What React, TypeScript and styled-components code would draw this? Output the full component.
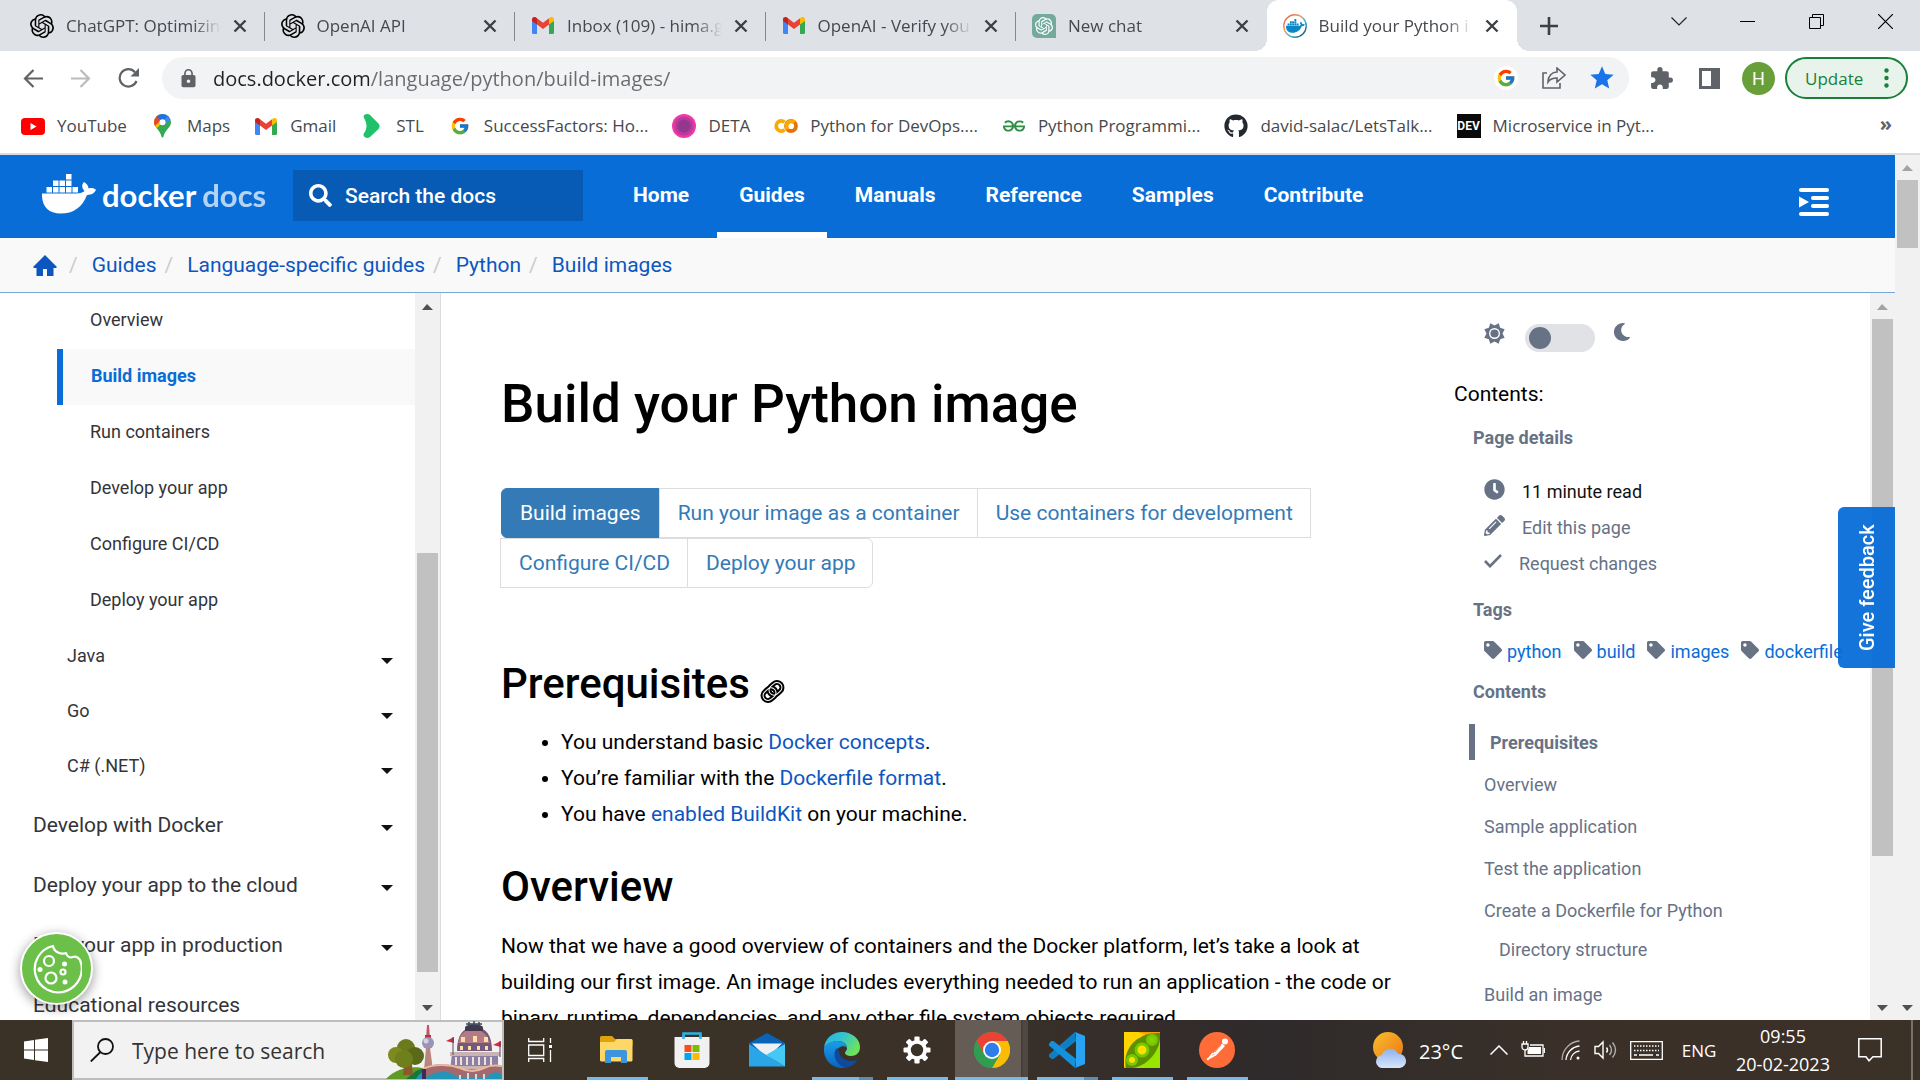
import React from "react";
import styled, { createGlobalStyle, css } from "styled-components";
import { SiOpenai, SiGooglecolab, SiGeeksforgeeks } from "react-icons/si";
import { FcGoogle } from "react-icons/fc";
import { FaMoon, FaClock, FaPencilAlt, FaTag, FaGithub, FaSearch } from "react-icons/fa";
import { MdExtension, MdStar, MdLock } from "react-icons/md";

const uiFont = `"Open Sans", "Noto Sans", sans-serif`;
const docFont = `Roboto, "Liberation Sans", sans-serif`;

const GlobalStyle = createGlobalStyle`
  *, *::before, *::after { box-sizing: border-box; }
  body { margin: 0; background: #fff; overflow: hidden; }
  a { color: inherit; text-decoration: none; }
  ul { list-style: none; margin: 0; padding: 0; }
  button { border: 0; padding: 0; margin: 0; background: none; color: inherit; font: inherit; cursor: pointer; }
  svg { display: block; flex: none; }
`;

const Screen = styled.div`
  display: flex;
  flex-direction: column;
  height: 100vh;
  color: #000;
  font-family: ${docFont};
`;

/* ---------- browser chrome ---------- */

const TabStrip = styled.div`
  display: flex;
  flex: none;
  height: 51px;
  padding-left: 14px;
  background: #dee1e6;
  font-family: ${uiFont};
`;

const Tabs = styled.div`
  display: flex;
  flex: 0 1 1503px;
  min-width: 0;
`;

const Tab = styled.div<{ $active?: boolean; $divided?: boolean }>`
  position: relative;
  display: flex;
  flex: 1 1 0;
  align-items: center;
  gap: 12px;
  min-width: 0;
  padding: 0 18px 0 16px;
  font-size: 17px;
  color: #45494d;
  ${(p) =>
    p.$divided &&
    css`
      &::after {
        content: "";
        position: absolute;
        right: 0;
        top: 12px;
        width: 1px;
        height: 29px;
        background: #85888c;
      }
    `}
  ${(p) =>
    p.$active &&
    css`
      background: #fff;
      border-radius: 12px 12px 0 0;
      &::before,
      &::after {
        content: "";
        position: absolute;
        bottom: 0;
        width: 12px;
        height: 12px;
      }
      &::before {
        left: -12px;
        background: radial-gradient(circle at 0 0, transparent 12px, #fff 12px);
      }
      &::after {
        right: -12px;
        background: radial-gradient(circle at 100% 0, transparent 12px, #fff 12px);
      }
    `}
`;

const TabTitle = styled.span`
  flex: 1;
  min-width: 0;
  overflow: hidden;
  white-space: nowrap;
  line-height: 24px;
  mask-image: linear-gradient(to right, #000 82%, transparent);
`;

const NewTab = styled.button`
  display: grid;
  place-items: center;
  width: 42px;
  margin-left: 11px;
`;

const WindowButtons = styled.div`
  display: flex;
  margin-left: auto;
  height: 43px;
`;

const WindowButton = styled.button`
  display: grid;
  place-items: center;
  width: 69px;
`;

const Toolbar = styled.div`
  display: flex;
  flex: none;
  align-items: center;
  height: 54px;
  padding: 0 12px 0 9px;
  font-family: ${uiFont};
`;

const ToolButton = styled.button<{ $dim?: boolean }>`
  display: grid;
  place-items: center;
  width: 48px;
  height: 42px;
  color: ${(p) => (p.$dim ? "#babcbe" : "#5f6368")};
`;

const Omnibox = styled.div`
  display: flex;
  flex: 1;
  align-items: center;
  height: 42px;
  margin-left: 9px;
  margin-right: 8px;
  padding-left: 16px;
  padding-right: 3px;
  background: #f1f3f4;
  border-radius: 21px;
  color: #5f6368;
`;

const UrlInput = styled.input`
  flex: 1;
  min-width: 0;
  height: 42px;
  margin-left: 14px;
  padding: 0;
  border: 0;
  outline: 0;
  color: #5f6368;
  font-family: ${uiFont};
  font-size: 20px;
  background: linear-gradient(to right, #202124 156px, #676b70 156px);
  background-clip: text;
  -webkit-text-fill-color: transparent;
`;

const Avatar = styled.button`
  width: 33px;
  height: 33px;
  margin: 0 10px 0 9px;
  border-radius: 50%;
  background: #689f38;
  color: #fff;
  font-family: ${docFont};
  font-size: 18px;
`;

const UpdateButton = styled.button`
  display: flex;
  align-items: center;
  justify-content: space-between;
  width: 123px;
  height: 42px;
  padding: 0 17px 0 18px;
  border: 2px solid #188038;
  border-radius: 21px;
  background: #e8f3ec;
  color: #188038;
  font-size: 17px;
`;

const BookmarkBar = styled.nav`
  display: flex;
  flex: none;
  align-items: center;
  gap: 24px;
  height: 50px;
  padding: 0 28px 6px 21px;
  border-bottom: 2px solid #dadce0;
  font-family: ${uiFont};
`;

const Bookmark = styled.a`
  display: flex;
  align-items: center;
  gap: 12px;
  color: #45494d;
  font-size: 17px;
  line-height: 24px;
  white-space: nowrap;
`;

const BookmarkOverflow = styled.button`
  margin-left: auto;
  padding-bottom: 4px;
  color: #5f6368;
  font-size: 20px;
  font-weight: 700;
  line-height: 24px;
`;

const IconBox = styled.span<{ $color?: string; $bg?: string; $round?: boolean }>`
  display: grid;
  place-items: center;
  flex: none;
  width: 24px;
  height: 24px;
  color: ${(p) => p.$color ?? "inherit"};
  background: ${(p) => p.$bg ?? "transparent"};
  border-radius: ${(p) => (p.$round ? "50%" : "0")};
`;

const DevBadge = styled(IconBox)`
  font: 700 12px ${docFont};
  color: #fff;
  background: #0a0a0a;
`;

/* ---------- docs page ---------- */

const Viewport = styled.div`
  display: flex;
  flex: 1;
  min-height: 0;
`;

const Page = styled.div`
  position: relative;
  display: flex;
  flex: 1;
  flex-direction: column;
  min-width: 0;
`;

const Header = styled.header`
  display: flex;
  flex: none;
  align-items: center;
  height: 83px;
  padding: 0 66px 0 42px;
  background: #086dd7;
  color: #fff;
`;

const Brand = styled.a`
  display: flex;
  align-items: center;
  width: 251px;
  gap: 6px;
  padding-bottom: 4px;
  font-family: Lato, sans-serif;
  font-size: 31px;
  line-height: 40px;
  white-space: nowrap;
  & > svg {
    margin-bottom: 2px;
  }
`;

const BrandWord = styled.span<{ $faded?: boolean }>`
  padding-top: 1px;
  font-weight: 700;
  opacity: ${(p) => (p.$faded ? 0.7 : 1)};
`;

const DocsSearch = styled.label`
  display: flex;
  align-items: center;
  gap: 13px;
  width: 290px;
  height: 51px;
  margin-bottom: 2px;
  padding: 0 16px;
  background: #085bb4;
`;

const DocsSearchInput = styled.input`
  flex: 1;
  min-width: 0;
  padding: 0;
  border: 0;
  outline: 0;
  background: none;
  color: #fff;
  font: 500 21px/28px ${docFont};
  &::placeholder {
    color: #fff;
    opacity: 1;
  }
`;

const MainNav = styled.nav`
  display: flex;
  align-self: stretch;
  gap: 6px;
  margin-left: 28px;
`;

const NavLink = styled.a<{ $active?: boolean }>`
  display: flex;
  align-items: center;
  padding: 2px 22px 0;
  border-bottom: 6px solid ${(p) => (p.$active ? "#fff" : "transparent")};
  font-size: 21px;
  font-weight: 700;
`;

const TocToggle = styled.button`
  margin-left: auto;
  padding-top: 10px;
`;

const Breadcrumbs = styled.nav`
  display: flex;
  flex: none;
  align-items: center;
  height: 55px;
  padding: 0 33px;
  background: #f9f9f9;
  border-bottom: 1px solid #7ba5dd;
  color: #0d56c0;
  font-size: 21px;
`;

const HomeCrumb = styled.a`
  margin-right: 4px;
`;

const Crumb = styled.a`
  &::before {
    content: "/";
    padding: 0 14px 0 8px;
    color: #ccc;
  }
`;

const Columns = styled.div`
  display: flex;
  flex: 1;
  min-height: 0;
`;

const Sidebar = styled.aside`
  display: flex;
  flex: none;
  width: 441px;
  border-right: 1px solid #dcdcdc;
`;

const SideList = styled.ul`
  flex: 1;
  min-width: 0;
  height: 100%;
  overflow: hidden;
  color: #33343a;
`;

const SideItem = styled.li<{ $level: 1 | 2 | 3; $active?: boolean }>`
  display: flex;
  align-items: center;
  justify-content: space-between;
  height: ${(p) => ({ 1: 60, 2: 55, 3: 56 })[p.$level]}px;
  padding-right: 22px;
  padding-left: ${(p) => ({ 1: 33, 2: 67, 3: 90 })[p.$level]}px;
  font-size: ${(p) => (p.$level === 1 ? 21 : 18)}px;
  ${(p) =>
    p.$active &&
    css`
      margin-left: 57px;
      padding-left: 28px;
      border-left: 6px solid #086dd7;
      background: #f9f9f9;
      color: #086dd7;
      font-weight: 700;
    `}
  & > a {
    padding-top: ${(p) => (p.$level === 1 ? 2 : 0)}px;
    padding-bottom: ${(p) => ({ 1: 0, 2: 2, 3: 4 })[p.$level]}px;
  }
  & > svg {
    margin-top: 8px;
    color: #111;
  }
`;

const ScrollTrack = styled.div<{ $inner?: boolean }>`
  display: flex;
  flex: none;
  flex-direction: column;
  align-items: center;
  width: 25px;
  padding-top: ${(p) => (p.$inner ? 1 : 0)}px;
  background: #f1f1f1;
`;

const ScrollArrow = styled.button<{ $down?: boolean; $dim?: boolean }>`
  flex: none;
  width: 25px;
  height: 25px;
  background: ${(p) => (p.$dim ? "#a3a3a3" : "#505050")};
  clip-path: ${(p) =>
    p.$down ? "polygon(7px 10px, 18px 10px, 12px 16px)" : "polygon(7px 16px, 18px 16px, 12px 10px)"};
`;

const ScrollPart = styled.div<{ $grow: number; $thumb?: boolean }>`
  flex: ${(p) => p.$grow} 1 0;
  width: 21px;
  background: ${(p) => (p.$thumb ? "#c1c1c1" : "transparent")};
`;

const Article = styled.main`
  flex: 1;
  min-width: 0;
  padding: 81px 54px 0 60px;
  overflow: hidden;
`;

const Title = styled.h1`
  margin: 0 0 54px;
  font-size: 53px;
  font-weight: 500;
  line-height: 60px;
`;

const Pills = styled.ul`
  display: flex;
  flex-wrap: wrap;
  margin-bottom: 73px;
`;

const Pill = styled.li<{ $active?: boolean }>`
  height: 50px;
  margin-left: -1px;
  padding: 0 17px 0 18px;
  border: 1px solid ${(p) => (p.$active ? "#337ab7" : "#ddd")};
  background: ${(p) => (p.$active ? "#337ab7" : "#fff")};
  color: ${(p) => (p.$active ? "#fff" : "#337ab7")};
  font-size: 21px;
  line-height: 48px;
  &:first-child {
    margin-left: 0;
    padding-right: 18px;
    border-radius: 6px 0 0 6px;
  }
  &:last-child {
    border-radius: 0 6px 6px 0;
  }
`;

const Heading = styled.h2`
  display: flex;
  align-items: center;
  gap: 10px;
  margin: 0 0 17px;
  font-size: 42px;
  font-weight: 500;
  line-height: 46px;
  & > svg {
    margin-top: 14px;
  }
`;

const Bullets = styled.ul`
  margin-bottom: 32px;
  padding-left: 60px;
  list-style: disc;
  font-size: 21px;
  line-height: 36px;
`;

const Paragraph = styled.p`
  margin: 0;
  padding-top: 1px;
  font-size: 21px;
  line-height: 36px;
`;

const TextLink = styled.a`
  color: #0d56c0;
`;

const Aside = styled.aside`
  display: flex;
  flex: none;
  flex-direction: column;
  width: 416px;
  overflow: hidden;
  padding-top: 30px;
  color: #677285;
  font-size: 18px;
`;

const ThemeRow = styled.div`
  display: flex;
  align-items: flex-start;
  height: 51px;
  padding-left: 30px;
`;

const ThemeSwitch = styled.input`
  appearance: none;
  width: 70px;
  height: 28px;
  margin: 1px 18px 0 20px;
  padding: 3px 4px;
  border-radius: 14px;
  background: #e1e2e6;
  &::before {
    content: "";
    display: block;
    width: 22px;
    height: 22px;
    border-radius: 50%;
    background: #677285;
  }
`;

const AsideLead = styled.div`
  padding-top: 2px;
  color: #000;
  font-size: 21px;
  line-height: 36px;
`;

const AsideLabel = styled.h3`
  margin: 0;
  padding-left: 19px;
  font-size: 18px;
  font-weight: 700;
  line-height: 52px;
`;

const MetaList = styled.ul`
  padding: 7px 0 5px 30px;
`;

const MetaRow = styled.li<{ $dark?: boolean }>`
  display: flex;
  align-items: center;
  gap: 17px;
  height: 36px;
  & > :last-child {
    color: ${(p) => (p.$dark ? "#111" : "#677285")};
    padding-top: 4px;
  }
`;

const TagRow = styled.div`
  display: flex;
  gap: 12px;
  padding-left: 30px;
  height: 30px;
  color: #677285;
  white-space: nowrap;
`;

const Tag = styled.a`
  display: flex;
  align-items: center;
  gap: 5px;
  & > svg {
    margin-bottom: 3px;
  }
  & > span {
    color: #086dd7;
  }
`;

const TocList = styled.ul`
  padding-top: 6px;
`;

const TocItem = styled.li<{ $kind?: "active" | "nested" }>`
  display: flex;
  align-items: center;
  height: 42px;
  padding-left: 30px;
  ${(p) =>
    p.$kind === "active" &&
    css`
      height: 36px;
      margin: 0 0 3px 15px;
      padding-left: 15px;
      border-left: 6px solid #677285;
      font-weight: 700;
    `}
  ${(p) =>
    p.$kind === "nested" &&
    css`
      height: 36px;
      margin-bottom: 6px;
      padding-left: 45px;
    `}
`;

const Feedback = styled.button`
  position: absolute;
  right: 0;
  top: 352px;
  width: 57px;
  height: 161px;
  border-radius: 0 6px 6px 0;
  background: rgba(8, 109, 215, 0.95);
  color: #fff;
  font: 500 20px ${docFont};
  writing-mode: vertical-rl;
  transform: rotate(180deg);
`;

const CookieButton = styled.button`
  position: absolute;
  left: 20px;
  bottom: 15px;
  display: grid;
  place-items: center;
  width: 73px;
  height: 73px;
  border: 2px solid #fff;
  border-radius: 50%;
  background: #6cc04a;
  box-shadow: 0 3px 12px rgba(0, 0, 0, 0.4);
`;

/* ---------- taskbar ---------- */

const Taskbar = styled.footer`
  display: flex;
  flex: none;
  align-items: stretch;
  height: 60px;
  background: linear-gradient(to right, #3a3127 0, #3b3128 50%, #2f2a2b 66%, #332d2a 72%, #3b3029 82%, #3a3127 100%);
  color: #fff;
  font-family: ${uiFont};
`;

const StartButton = styled.button`
  display: grid;
  place-items: center;
  width: 72px;
`;

const TaskSearch = styled.label`
  display: flex;
  align-items: center;
  width: 432px;
  padding-left: 16px;
  border: 2px solid #bebebe;
  background: #f2f2f2;
  color: #222;
`;

const TaskSearchInput = styled.input`
  flex: 1;
  min-width: 0;
  margin-left: 18px;
  padding: 2px 0 0;
  border: 0;
  outline: 0;
  background: none;
  font: 21px ${uiFont};
  &::placeholder {
    color: #333;
    opacity: 1;
  }
`;

const TaskApps = styled.div`
  display: flex;
  margin-left: 3px;
`;

const TaskApp = styled.button<{ $open?: boolean; $active?: boolean; $stacked?: boolean }>`
  position: relative;
  display: grid;
  place-items: center;
  width: 75px;
  ${(p) =>
    p.$active &&
    css`
      background: linear-gradient(to right, transparent 1px, #655d55 1px, #655d55 67px, #3f3832 67px, #4f4842 69px, #4f4842 74px, transparent 74px);
    `}
  ${(p) =>
    p.$open &&
    css`
      &::after {
        content: "";
        position: absolute;
        bottom: 0;
        left: ${p.$active ? 1 : 8}px;
        right: ${p.$active ? 1 : 6}px;
        height: 3px;
        background: ${p.$stacked ? "linear-gradient(to right, #76b9ed 77%, #5d8cb2 77%)" : "#76b9ed"};
      }
    `}
`;

const Tray = styled.div`
  display: flex;
  align-items: center;
  margin-left: auto;
  font-size: 17px;
`;

const TrayButton = styled.button<{ $w: number }>`
  display: flex;
  align-items: center;
  justify-content: center;
  gap: 12px;
  width: ${(p) => p.$w}px;
  height: 60px;
`;

const Temperature = styled.span`
  padding-top: 2px;
  font-size: 20px;
`;

const Clock = styled.time`
  display: flex;
  flex-direction: column;
  width: 112px;
  font-size: 18px;
  line-height: 28px;
  text-align: center;
`;

const ShowDesktop = styled.button`
  width: 9px;
  height: 60px;
  margin-left: 10px;
  border-left: 2px solid #77716b;
`;

/* ---------- drawings ---------- */

const CloseIcon = ({ size = 14 }: { size?: number }) => (
  <svg width={size} height={size} viewBox="0 0 14 14" stroke="#3c4043" strokeWidth="2.4">
    <path d="M1.5 1.5l11 11M12.5 1.5l-11 11" />
  </svg>
);

const GmailIcon = () => (
  <svg width="22" height="17" viewBox="0 0 22 17">
    <path d="M0 2.5V15.5Q0 17 1.5 17H5V7z" fill="#4285f4" />
    <path d="M22 2.5V15.5Q22 17 20.500 17H17V7z" fill="#34a853" />
    <path d="M17 1.200V7.500L22 4V2.400C22 .2 19.600-.6 18 .5z" fill="#fbbc04" />
    <path d="M5 1.200L11 5.700 17 1.200V7.500L11 12 5 7.500z" fill="#ea4335" />
    <path d="M0 2.400V4L5 7.500V1.200L4 .5C2.400-.6 0 .2 0 2.400z" fill="#c5221f" />
  </svg>
);

const NewChatIcon = () => (
  <svg width="24" height="24" viewBox="0 0 24 24">
    <path d="M5 0h14a5 5 0 0 1 5 5v19H5a5 5 0 0 1-5-5V5a5 5 0 0 1 5-5z" fill="#74aa9c" />
    <g transform="translate(3 3)" color="#fff">
      <SiOpenai size={18} />
    </g>
  </svg>
);

const WhaleShape = () => (
  <>
    <path d="M0 19.500H34.500C38 19.500 41 18.500 42.500 17 39.500 14 39.500 10.500 42 8 45 10 46.500 12 46.500 14.500 49 13.600 52 14 54 15.800 52.500 19.500 49 21 45 20.900 40.500 33 31.500 39.500 18.500 39.500 6.500 39.500-.5 32 0 19.500z" />
    <path d="M4.500 13h5.500v5.500H4.500zM11 13h5.500v5.500H11zM17.500 13H23v5.500h-5.500zM24 13h5.500v5.500H24zM30.500 13H36v5.500h-5.500zM11 6.500h5.500V12H11zM17.500 6.500H23V12h-5.500zM24 6.500h5.500V12H24zM24 0h5.500v5.500H24z" />
  </>
);

const DockerFavicon = () => (
  <svg width="24" height="24" viewBox="0 0 24 24">
    <defs>
      <linearGradient id="ring" x1="0" y1="0" x2="1" y2="1">
        <stop offset="0" stopColor="#e2574c" />
        <stop offset=".4" stopColor="#f0a060" />
        <stop offset=".6" stopColor="#35b8d8" />
        <stop offset="1" stopColor="#1b3a5b" />
      </linearGradient>
    </defs>
    <circle cx="12" cy="12" r="11.200" fill="#fff" stroke="url(#ring)" strokeWidth="1.400" />
    <g transform="translate(3 5) scale(.35)" fill="#0b87c9">
      <WhaleShape />
    </g>
  </svg>
);

const YoutubeIcon = () => (
  <svg width="24" height="17" viewBox="0 0 24 17">
    <rect width="24" height="17" rx="4" fill="#f00" />
    <path d="M9.500 5l6 3.500-6 3.500z" fill="#fff" />
  </svg>
);

const MapsIcon = () => (
  <svg width="17" height="24" viewBox="0 0 17 24">
    <defs>
      <clipPath id="pin">
        <path d="M8.500 0A8.300 8.300 0 0 0 0 8.400C0 13.500 6.500 16 7.600 23a1 1 0 0 0 1.800 0C10.500 16 17 13.500 17 8.400A8.300 8.300 0 0 0 8.500 0z" />
      </clipPath>
    </defs>
    <g clipPath="url(#pin)">
      <path d="M0 0h17v24H0z" fill="#34a853" />
      <path d="M0 17L17 0v-1H0z" fill="#fbbc04" />
      <path d="M0 13L9 4 4-1H0z" fill="#ea4335" />
      <path d="M2.500 2L8 8l8.500-7L10-2z" fill="#1a73e8" />
      <path d="M8 8l7-7 2 4-7 6z" fill="#4285f4" />
    </g>
    <circle cx="8.500" cy="8.300" r="3" fill="#fff" />
  </svg>
);

const StlIcon = () => (
  <svg width="24" height="24" viewBox="0 0 24 24" fill="#1fc16b">
    <path d="M3.500 3C3.500-.5 9-1 11 2L18.500 9.500C20 11.500 20 13 18.500 15L10 23C7 25 3 23.500 3.500 20 7.500 15 7.500 9.500 3.500 3z" />
  </svg>
);

const DetaIcon = () => (
  <svg width="24" height="24" viewBox="0 0 24 24">
    <circle cx="12" cy="12" r="12" fill="#ef39a8" />
    <circle cx="12" cy="12" r="9.500" fill="#bd399c" />
    <circle cx="12" cy="12" r="6.500" fill="#93388e" />
  </svg>
);

const ColabIcon = () => (
  <svg width="24" height="14" viewBox="0 0 24 14" fill="none" strokeWidth="3.800">
    <path d="M10.500 10.800A5 5 0 1 1 10.500 3.200" stroke="#f9ab00" />
    <circle cx="17" cy="7" r="5" stroke="#e8710a" />
    <path d="M13.500 10.500A5 5 0 0 1 20.500 3.500" stroke="#f9ab00" />
  </svg>
);

const SunIcon = () => {
  const points = Array.from({ length: 16 }, (_, i) => {
    const r = i % 2 ? 8 : 11;
    const a = (Math.PI / 8) * (i + 1);
    return `${(r * Math.cos(a)).toFixed(2)},${(r * Math.sin(a)).toFixed(2)}`;
  }).join(" ");
  return (
    <svg width="21" height="21" viewBox="-10.500 -10.500 21 21">
      <polygon points={points} fill="#677285" />
      <circle r="4.800" fill="none" stroke="#fff" strokeWidth="1.400" />
    </svg>
  );
};

const LinkIcon = () => (
  <svg width="25" height="25" viewBox="0 0 25 25" fill="none">
    <g transform="rotate(-42 12.500 12.500)">
      <rect x="1.500" y="7.500" width="14" height="10" rx="5" stroke="#000" strokeWidth="5" />
      <rect x="9.500" y="7.500" width="14" height="10" rx="5" stroke="#000" strokeWidth="5" />
      <rect x="1.500" y="7.500" width="14" height="10" rx="5" stroke="#fff" strokeWidth="1" />
      <rect x="9.500" y="7.500" width="14" height="10" rx="5" stroke="#fff" strokeWidth="1" />
    </g>
  </svg>
);

const SearchGlyph = () => (
  <svg width="24" height="24" viewBox="0 0 24 24" fill="none" stroke="#111" strokeWidth="1.800">
    <circle cx="15.500" cy="8.500" r="7.500" />
    <path d="M10.500 14L.8 23.500" />
  </svg>
);

const CityScene = () => (
  <svg width="116" height="58" viewBox="0 0 116 58">
    <path d="M0 58C10 46 30 44 40 48L60 58z" fill="#5f9a26" />
    <path d="M30 50c14-6 24-4 34 4l-4 4H20z" fill="#107a3a" />
    <path d="M40 50h76v8H30c2-4 5-7 10-8z" fill="#2295b8" />
    <path d="M19 34h6l2 20h-10z" fill="#8a5a2a" />
    <circle cx="20" cy="27" r="9" fill="#6b7a1c" />
    <circle cx="10" cy="34" r="8" fill="#7d8a20" />
    <circle cx="29" cy="35" r="9" fill="#596a18" />
    <circle cx="18" cy="38" r="9" fill="#6f7f1c" />
    <path d="M41 4h2l1 14h-4z" fill="#c0566a" />
    <path d="M39 14h6v5h-6z" fill="#c22f3a" />
    <circle cx="42" cy="22" r="6" fill="#9a93b8" />
    <circle cx="40" cy="20" r="2.500" fill="#d6d2e6" />
    <path d="M40 27h4l3 22H38z" fill="#b9857d" />
    <path d="M66 32h46v18H64z" fill="#8d7fa3" />
    <path d="M64 31h50v4H64zM64 45h50v3H64z" fill="#c9b3b5" />
    <path d="M71 30C71 14 77 7 86 7h5c9 0 15 7 15 23z" fill="#735a7c" />
    <path d="M72 22c2-9 7-14 15-14s14 5 17 14z" fill="#b27c86" />
    <path d="M79 7c0-5 18-5 18 0v3H79z" fill="#453650" />
    <path d="M80 3h16M83 1v5M88 0v5M93 1v5" stroke="#354c58" strokeWidth="1.500" />
    <g fill="#ffe0a0">
      <path d="M75 16h4v5h-4zM87 15h4v6h-4zM98 16h4v5h-4zM74 25h3v4h-3zM82 25h3v4h-3zM91 25h3v4h-3zM99 25h3v4h-3z" />
    </g>
    <g fill="#f0e2d4">
      <path d="M69 36h2v8h-2zM74 36h2v8h-2zM80 36h2v8h-2zM86 36h2v8h-2zM92 36h2v8h-2zM98 36h2v8h-2zM104 36h2v8h-2z" />
    </g>
    <path d="M60 20l8-4v6zM107 24l8-4v6z" fill="#d42a3c" />
    <path d="M67 16v18M114 20v16" stroke="#5a4462" strokeWidth="1" />
    <path d="M36 48c10-6 26-6 38-1 8 4 16 4 24 0 6-3 12-3 18-2v8c-8-4-12 0-16 4H72c-6-8-24-8-34 1z" fill="#a3696c" />
    <path d="M37 48c10-5 26-5 37-1 8 4 16 4 24 0 6-3 12-3 18-2" stroke="#efb89c" strokeWidth="2" fill="none" />
    <path d="M36 48h4v10h-4z" fill="#3b2a5a" />
    <path d="M74 54v4M82 52v6M90 53v5M98 53v5" stroke="#bfe3f2" strokeWidth="2" />
  </svg>
);

const EdgeIcon = () => (
  <svg width="36" height="36" viewBox="0 0 36 36">
    <defs>
      <linearGradient id="edgeTop" x1="0" y1="0" x2="1" y2=".5">
        <stop offset="0" stopColor="#2ab3ea" />
        <stop offset=".5" stopColor="#35c3cf" />
        <stop offset="1" stopColor="#6be35b" />
      </linearGradient>
      <linearGradient id="edgeSide" x1="0" y1="0" x2="0" y2="1">
        <stop offset="0" stopColor="#1b9ee8" />
        <stop offset="1" stopColor="#0a63c0" />
      </linearGradient>
    </defs>
    <path d="M0 16C1 6 9 0 18 0c10 0 18 7 18 15 0 6-4 9-9 9-4 0-6-1.500-6-3s2-2 2-5c0-4-4-7-9-7C8 9 2 12 0 16z" fill="url(#edgeTop)" />
    <path d="M0 16C2 12 8 9 13 9c6 0 10 3 10 7-2-3-9-2-10 3-1 7 4 13 10 16-13 4-24-6-23-19z" fill="url(#edgeSide)" />
    <path d="M13.500 16c-3 2-4 6-2 11 2 5 6 8 11 8.400 5-1 9-4 11.500-8-6 3-14 1-17-3-2-3-2-6-3.500-8.400z" fill="#114a9b" />
  </svg>
);

const ChromeIcon = () => (
  <svg width="36" height="36" viewBox="0 0 36 36">
    <circle cx="18" cy="18" r="18" fill="#34a853" />
    <path d="M2.400 9A18 18 0 0 1 33.600 9H18l-7.800 13.500z" fill="#ea4335" />
    <path d="M33.600 9A18 18 0 0 1 18 36l7.800-13.500L18 9z" fill="#fbbc04" />
    <path d="M18 36A18 18 0 0 1 2.400 9l7.800 13.500 15.600 0z" fill="#2f9e50" />
    <circle cx="18" cy="18" r="9" fill="#fff" />
    <circle cx="18" cy="18" r="7.200" fill="#2f7ced" />
  </svg>
);

const VsCodeIcon = () => (
  <svg width="36" height="36" viewBox="0 0 36 36">
    <path d="M26 0L0 22.500 0 24.500 2.500 27 4.500 27 27 9z" fill="#0f7fc4" />
    <path d="M26 36L0 13.500 0 11.500 2.500 9 4.500 9 27 27z" fill="#1590dc" />
    <path d="M26 0l10 4v28l-10 4 1-2V3z" fill="#2aa3f3" />
  </svg>
);

const PeaIcon = () => (
  <svg width="36" height="36" viewBox="0 0 36 36">
    <path d="M0 0h36L0 36z" fill="#ffd400" />
    <path d="M36 0v36H0z" fill="#97e600" />
    <path d="M14 0h22v8z" fill="#ff9d00" />
    <path d="M2 36C-2 18 12 0 36 1 38 18 22 38 2 36z" fill="#5d8f00" />
    <g fill="#ffdf00" stroke="#74c900" strokeWidth="3">
      <circle cx="8" cy="28" r="4.500" />
      <circle cx="18" cy="18" r="6" />
      <circle cx="28" cy="8" r="4.500" fill="#8ad000" />
    </g>
  </svg>
);

const PostmanIcon = () => (
  <svg width="36" height="36" viewBox="0 0 36 36">
    <circle cx="18" cy="18" r="18" fill="#ff6c37" />
    <circle cx="26" cy="9.500" r="3" fill="#fff" />
    <path d="M23 11.500l3 2.500-8.500 9-4-1z" fill="#fff" />
    <path d="M14 21l-5.500 7M17 22.500L8 27.500" stroke="#fff" strokeWidth="1.600" />
    <path d="M22 13l-6 7" stroke="#ff6c37" strokeWidth=".8" />
  </svg>
);

const GearIcon = () => (
  <svg width="28" height="28" viewBox="-14 -14 28 28" fill="#fff">
    {[0, 45, 90, 135].map((a) => (
      <rect key={a} x="-2.600" y="-13.500" width="5.200" height="27" rx="1" transform={`rotate(${a})`} />
    ))}
    <circle r="10" />
    <circle r="6.200" fill="#3a3127" />
  </svg>
);

const FolderIcon = () => (
  <svg width="33" height="28" viewBox="0 0 33 28">
    <path d="M0 1.500Q0 0 1.500 0H12l3 3H31q1.500 0 1.500 1.500V10H0z" fill="#e0a20c" />
    <path d="M0 6h14l3-3h14q1.500 0 1.500 1.500V24q0 1.500-1.500 1.500H1.500Q0 25.500 0 24z" fill="#ffd767" />
    <path d="M5 16q0-2 2-2h18q2 0 2 2v11h-6v-6H11v6H5z" fill="#3d96dd" />
  </svg>
);

const StoreIcon = () => (
  <svg width="36" height="36" viewBox="0 0 36 36">
    <path d="M9.500 7V1.500h17V7" fill="none" stroke="#2cb2e8" strokeWidth="2.400" />
    <path d="M.5 5h35v26a5 5 0 0 1-5 5h-25a5 5 0 0 1-5-5z" fill="#f1f1f1" />
    <path d="M9.500 2.500V7M26.500 2.500V7" stroke="#2cb2e8" strokeWidth="2.400" />
    <path d="M10.500 13h7v7h-7z" fill="#f25022" />
    <path d="M18.500 13h7v7h-7z" fill="#7fba00" />
    <path d="M10.500 21h7v7h-7z" fill="#00a4ef" />
    <path d="M18.500 21h7v7h-7z" fill="#ffb900" />
  </svg>
);

const MailIcon = () => (
  <svg width="36" height="34" viewBox="0 0 36 34">
    <path d="M0 10L18 0l18 10v4L18 26 0 14z" fill="#0b63b5" />
    <path d="M3 10.500h30L18 25z" fill="#eef1f3" />
    <path d="M0 11l36 22.500H0z" fill="#2aa5e8" />
    <path d="M36 11v22.500L17 22z" fill="#44c8f5" />
  </svg>
);

const Scrollbar = ({
  parts,
  dimUp,
  inner,
}: {
  parts: [number, number, number];
  dimUp?: boolean;
  inner?: boolean;
}) => (
  <ScrollTrack $inner={inner}>
    <ScrollArrow aria-label="Scroll up" $dim={dimUp} />
    <ScrollPart $grow={parts[0]} />
    <ScrollPart $grow={parts[1]} $thumb />
    <ScrollPart $grow={parts[2]} />
    <ScrollArrow aria-label="Scroll down" $down />
  </ScrollTrack>
);

/* ---------- data ---------- */

const tabs = [
  { title: "ChatGPT: Optimizin", icon: <SiOpenai size={24} color="#000" />, divided: true },
  { title: "OpenAI API", icon: <SiOpenai size={24} color="#000" />, divided: true },
  { title: "Inbox (109) - hima.g", icon: <GmailIcon />, divided: true },
  { title: "OpenAI - Verify you", icon: <GmailIcon />, divided: true },
  { title: "New chat", icon: <NewChatIcon /> },
  { title: "Build your Python i", icon: <DockerFavicon />, active: true },
];

const bookmarks = [
  { label: "YouTube", icon: <YoutubeIcon /> },
  { label: "Maps", icon: <MapsIcon /> },
  { label: "Gmail", icon: <GmailIcon /> },
  { label: "STL", icon: <StlIcon /> },
  { label: "SuccessFactors: Ho...", icon: <FcGoogle size={20} /> },
  { label: "DETA", icon: <DetaIcon /> },
  { label: "Python for DevOps....", icon: <ColabIcon /> },
  { label: "Python Programmi...", icon: <SiGeeksforgeeks size={22} color="#2f8d46" /> },
  { label: "david-salac/LetsTalk...", icon: <FaGithub size={24} color="#24292f" /> },
];

const sideItems: { label: string; level: 1 | 2 | 3; active?: boolean; leaf?: boolean }[] = [
  { label: "Overview", level: 3 },
  { label: "Build images", level: 3, active: true },
  { label: "Run containers", level: 3 },
  { label: "Develop your app", level: 3 },
  { label: "Configure CI/CD", level: 3 },
  { label: "Deploy your app", level: 3 },
  { label: "Java", level: 2 },
  { label: "Go", level: 2 },
  { label: "C# (.NET)", level: 2 },
  { label: "Develop with Docker", level: 1 },
  { label: "Deploy your app to the cloud", level: 1 },
  { label: "Run your app in production", level: 1 },
  { label: "Educational resources", level: 1, leaf: true },
];

const tocItems: { label: string; kind?: "active" | "nested" }[] = [
  { label: "Prerequisites", kind: "active" },
  { label: "Overview" },
  { label: "Sample application" },
  { label: "Test the application" },
  { label: "Create a Dockerfile for Python" },
  { label: "Directory structure", kind: "nested" },
  { label: "Build an image" },
];

const Caret = () => (
  <svg width="12" height="6" viewBox="0 0 12 6" fill="#111">
    <path d="M0 0h12L6 6z" />
  </svg>
);

export default function App() {
  return (
    <Screen>
      <GlobalStyle />

      <TabStrip>
        <Tabs>
          {tabs.map((t) => (
            <Tab key={t.title} $active={t.active} $divided={t.divided}>
              <IconBox>{t.icon}</IconBox>
              <TabTitle>{t.title}</TabTitle>
              <button aria-label="Close tab">
                <CloseIcon />
              </button>
            </Tab>
          ))}
        </Tabs>
        <NewTab aria-label="New tab">
          <svg width="18" height="18" viewBox="0 0 18 18" stroke="#3c4043" strokeWidth="2.600">
            <path d="M9 0v18M0 9h18" />
          </svg>
        </NewTab>
        <WindowButtons>
          <WindowButton aria-label="Search tabs">
            <svg width="16" height="9" viewBox="0 0 16 9" fill="none" stroke="#222" strokeWidth="1.200">
              <path d="M.5.5L8 8 15.500.5" />
            </svg>
          </WindowButton>
          <WindowButton aria-label="Minimize">
            <svg width="15" height="2" viewBox="0 0 15 2">
              <path d="M0 0h15v1H0z" fill="#000" />
            </svg>
          </WindowButton>
          <WindowButton aria-label="Restore">
            <svg width="15" height="15" viewBox="0 0 15 15" fill="none" stroke="#000">
              <path d="M.5 3.500h11v11H.5zM3.500 3V.5h11v11H12" />
            </svg>
          </WindowButton>
          <WindowButton aria-label="Close">
            <svg width="15" height="15" viewBox="0 0 15 15" fill="none" stroke="#000" strokeWidth="1.200">
              <path d="M0 0l15 15M15 0L0 15" />
            </svg>
          </WindowButton>
        </WindowButtons>
      </TabStrip>

      <Toolbar>
        <ToolButton aria-label="Back">
          <svg width="20" height="19" viewBox="0 0 20 19" fill="none" stroke="currentColor" strokeWidth="2.200">
            <path d="M20 9.500H2M10.500 1L2 9.500l8.500 8.500" />
          </svg>
        </ToolButton>
        <ToolButton aria-label="Forward" $dim>
          <svg width="20" height="19" viewBox="0 0 20 19" fill="none" stroke="currentColor" strokeWidth="2.200">
            <path d="M0 9.500h18M9.500 1L18 9.500 9.500 18" />
          </svg>
        </ToolButton>
        <ToolButton aria-label="Reload">
          <svg width="22" height="20" viewBox="0 0 22 20" fill="none" stroke="currentColor" strokeWidth="2.200">
            <path d="M18.500 13A8.700 8.700 0 1 1 17 4.200" />
            <path d="M21 0v8.500h-8.500z" fill="currentColor" stroke="none" />
          </svg>
        </ToolButton>
        <Omnibox>
          <MdLock size={21} />
          <UrlInput aria-label="Address" defaultValue="docs.docker.com/language/python/build-images/" />
          <ToolButton aria-label="Google">
            <IconBox $bg="#fff" $round>
              <FcGoogle size={20} />
            </IconBox>
          </ToolButton>
          <ToolButton aria-label="Share">
            <svg width="24" height="22" viewBox="0 0 24 22" fill="none" stroke="currentColor" strokeWidth="1.600">
              <path d="M5 6H1v15h17v-5" />
              <path d="M15 1l8 7-8 7v-4c-4 0-7 1-9 4 0-6 4-10 9-10z" />
            </svg>
          </ToolButton>
          <ToolButton aria-label="Bookmarked">
            <MdStar size={28} color="#1a73e8" />
          </ToolButton>
        </Omnibox>
        <ToolButton aria-label="Extensions">
          <MdExtension size={25} />
        </ToolButton>
        <ToolButton aria-label="Side panel">
          <svg width="21" height="21" viewBox="0 0 21 21">
            <path d="M0 0h21v21H0zM3 3v15h9V3z" fill="#5f6368" fillRule="evenodd" />
          </svg>
        </ToolButton>
        <Avatar>H</Avatar>
        <UpdateButton>
          Update
          <svg width="5" height="20" viewBox="0 0 5 20" fill="#188038">
            <circle cx="2.500" cy="2.500" r="2.200" />
            <circle cx="2.500" cy="10" r="2.200" />
            <circle cx="2.500" cy="17.500" r="2.200" />
          </svg>
        </UpdateButton>
      </Toolbar>

      <BookmarkBar aria-label="Bookmarks">
        {bookmarks.map((b) => (
          <Bookmark key={b.label} href="#">
            <IconBox>{b.icon}</IconBox>
            {b.label}
          </Bookmark>
        ))}
        <Bookmark href="#">
          <DevBadge>DEV</DevBadge>
          Microservice in Pyt...
        </Bookmark>
        <BookmarkOverflow>»</BookmarkOverflow>
      </BookmarkBar>

      <Viewport>
        <Page>
          <Header>
            <Brand href="#">
              <svg width="54" height="40" viewBox="0 0 54 40" fill="#fff">
                <WhaleShape />
              </svg>
              <BrandWord>docker</BrandWord>
              <BrandWord $faded>docs</BrandWord>
            </Brand>
            <DocsSearch>
              <FaSearch size={23} />
              <DocsSearchInput placeholder="Search the docs" />
            </DocsSearch>
            <MainNav>
              {["Home", "Guides", "Manuals", "Reference", "Samples", "Contribute"].map((n) => (
                <NavLink key={n} href="#" $active={n === "Guides"}>
                  {n}
                </NavLink>
              ))}
            </MainNav>
            <TocToggle aria-label="Toggle contents">
              <svg width="30" height="28" viewBox="0 0 30 28" fill="#fff">
                <rect width="30" height="4" rx="2" />
                <rect x="12" y="8" width="18" height="4" rx="2" />
                <rect x="12" y="16" width="18" height="4" rx="2" />
                <rect y="24" width="30" height="4" rx="2" />
                <path d="M0 8.500L10 14 0 19.500z" />
              </svg>
            </TocToggle>
          </Header>

          <Breadcrumbs aria-label="Breadcrumb">
            <HomeCrumb href="#" aria-label="Docs home">
              <svg width="24" height="21" viewBox="0 0 24 21" fill="#0d56c0">
                <path d="M12 0l12 12-1 1h-2.500v8H14v-7h-4v7H3.500v-8H1l-1-1z" />
              </svg>
            </HomeCrumb>
            {["Guides", "Language-specific guides", "Python", "Build images"].map((c) => (
              <Crumb key={c} href="#">
                {c}
              </Crumb>
            ))}
          </Breadcrumbs>

          <Columns>
            <Sidebar>
              <SideList>
                {sideItems.map((s) => (
                  <SideItem key={s.label} $level={s.level} $active={s.active}>
                    <a href="#">{s.label}</a>
                    {s.level !== 3 && !s.leaf && <Caret />}
                  </SideItem>
                ))}
              </SideList>
              <Scrollbar parts={[234, 419, 23]} inner />
            </Sidebar>

            <Article>
              <Title>Build your Python image</Title>
              <Pills>
                {[
                  "Build images",
                  "Run your image as a container",
                  "Use containers for development",
                  "Configure CI/CD",
                  "Deploy your app",
                ].map((p, i) => (
                  <Pill key={p} $active={i === 0}>
                    <a href="#">{p}</a>
                  </Pill>
                ))}
              </Pills>
              <Heading>
                Prerequisites
                <LinkIcon />
              </Heading>
              <Bullets>
                <li>
                  You understand basic <TextLink href="#">Docker concepts</TextLink>.
                </li>
                <li>
                  You’re familiar with the <TextLink href="#">Dockerfile format</TextLink>.
                </li>
                <li>
                  You have <TextLink href="#">enabled BuildKit</TextLink> on your machine.
                </li>
              </Bullets>
              <Heading>Overview</Heading>
              <Paragraph>
                Now that we have a good overview of containers and the Docker platform, let’s take a look at building our
                first image. An image includes everything needed to run an application - the code or binary, runtime,
                dependencies, and any other file system objects required.
              </Paragraph>
            </Article>

            <Aside>
              <ThemeRow>
                <SunIcon />
                <ThemeSwitch type="checkbox" aria-label="Dark theme" />
                <FaMoon size={18} />
              </ThemeRow>
              <AsideLead>Contents:</AsideLead>
              <AsideLabel>Page details</AsideLabel>
              <MetaList>
                <MetaRow $dark>
                  <FaClock size={21} />
                  <span>11 minute read</span>
                </MetaRow>
                <MetaRow>
                  <FaPencilAlt size={21} />
                  <a href="#">Edit this page</a>
                </MetaRow>
                <MetaRow>
                  <svg width="18" height="14" viewBox="0 0 18 14" fill="none" stroke="#677285" strokeWidth="2.600">
                    <path d="M1 7l5 5.200L17 1" />
                  </svg>
                  <a href="#">Request changes</a>
                </MetaRow>
              </MetaList>
              <AsideLabel>Tags</AsideLabel>
              <TagRow>
                {["python", "build", "images", "dockerfile"].map((t) => (
                  <Tag key={t} href="#">
                    <FaTag size={18} />
                    <span>{t}</span>
                  </Tag>
                ))}
              </TagRow>
              <AsideLabel>Contents</AsideLabel>
              <TocList>
                {tocItems.map((t) => (
                  <TocItem key={t.label} $kind={t.kind}>
                    <a href="#">{t.label}</a>
                  </TocItem>
                ))}
              </TocList>
            </Aside>
            <Scrollbar parts={[0, 537, 139]} dimUp inner />
          </Columns>

          <CookieButton aria-label="Cookie settings">
            <svg width="50" height="50" viewBox="0 0 50 50" fill="none" stroke="#fff" strokeWidth="2.200">
              <path d="M21 2A23.500 23.500 0 1 0 48 16C46 13 44 12 41 13 38 14 35 13 34 9 29 11 22 8 21 2z" strokeLinejoin="round" />
              <circle cx="17" cy="17" r="5" />
              <circle cx="19" cy="34" r="5.500" />
              <circle cx="31" cy="28" r="2.500" />
              <g fill="#fff" stroke="none">
                <circle cx="32.500" cy="20" r="2.500" />
                <circle cx="8" cy="25.500" r="2.500" />
                <circle cx="33" cy="38" r="2.500" />
              </g>
            </svg>
          </CookieButton>
          <Feedback>Give feedback</Feedback>
        </Page>
        <Scrollbar parts={[0, 68, 747]} dimUp />
      </Viewport>

      <Taskbar>
        <StartButton aria-label="Start">
          <svg width="24" height="24" viewBox="0 0 24 24" fill="#fff">
            <path d="M0 3.400l10-1.400v9.500H0zM11 1.800L24 0v11.500H11zM0 12.500h10V22L0 20.600zM11 12.500h13V24l-13-1.800z" />
          </svg>
        </StartButton>
        <TaskSearch>
          <SearchGlyph />
          <TaskSearchInput placeholder="Type here to search" />
          <CityScene />
        </TaskSearch>
        <StartButton aria-label="Task view">
          <svg width="24" height="24" viewBox="0 0 24 24" fill="none" stroke="#fff" strokeWidth="1.300">
            <path d="M.7 0v3.500h15V0M.7 7h15v10.500H.7zM.7 24v-3.500h15V24M22.500 0v5M22.500 12v12" />
            <path d="M21 7h3v3h-3z" fill="#fff" stroke="none" />
          </svg>
        </StartButton>
        <TaskApps>
          <TaskApp aria-label="File Explorer" $open><FolderIcon /></TaskApp>
          <TaskApp aria-label="Microsoft Store"><StoreIcon /></TaskApp>
          <TaskApp aria-label="Mail"><MailIcon /></TaskApp>
          <TaskApp aria-label="Edge" $open $stacked><EdgeIcon /></TaskApp>
          <TaskApp aria-label="Settings" $open><GearIcon /></TaskApp>
          <TaskApp aria-label="Chrome" $open $active><ChromeIcon /></TaskApp>
          <TaskApp aria-label="Visual Studio Code" $open $stacked><VsCodeIcon /></TaskApp>
          <TaskApp aria-label="PeaZip" $open><PeaIcon /></TaskApp>
          <TaskApp aria-label="Postman" $open><PostmanIcon /></TaskApp>
        </TaskApps>
        <Tray>
          <TrayButton $w={130}>
            <svg width="34" height="40" viewBox="0 0 34 40">
              <defs>
                <linearGradient id="sunFill" x1="0" y1="0" x2="1" y2="1">
                  <stop offset="0" stopColor="#f8c02c" />
                  <stop offset="1" stopColor="#ee7414" />
                </linearGradient>
                <linearGradient id="cloudFill" x1="0" y1="0" x2="0" y2="1">
                  <stop offset="0" stopColor="#8fb2ee" />
                  <stop offset="1" stopColor="#d9e5fb" />
                </linearGradient>
              </defs>
              <circle cx="15" cy="17" r="15" fill="url(#sunFill)" />
              <path d="M10 38a6.500 6.500 0 0 1-1-13 8.500 8.500 0 0 1 16-1 7 7 0 0 1 2 14z" fill="url(#cloudFill)" />
            </svg>
            <Temperature>23°C</Temperature>
          </TrayButton>
          <TrayButton $w={32} aria-label="Show hidden icons">
            <svg width="18" height="10" viewBox="0 0 18 10" fill="none" stroke="#fff" strokeWidth="1.500">
              <path d="M.5 9.500L9 1l8.500 8.500" />
            </svg>
          </TrayButton>
          <TrayButton $w={36} aria-label="Battery">
            <svg width="24" height="18" viewBox="0 0 24 18" fill="none" stroke="#fff" strokeWidth="1.300">
              <path d="M1 3h6v3a3 3 0 0 1-6 0zM2.500 0v3M5.500 0v3M4 9v6h18V4H9" />
              <path d="M23.300 7v5" />
              <path d="M8 6h12v7H6.500v-3z" fill="#fff" stroke="none" />
            </svg>
          </TrayButton>
          <TrayButton $w={38} aria-label="Network">
            <svg width="19" height="20" viewBox="0 0 19 20" fill="none" stroke="#fff" strokeWidth="1.300">
              <path d="M1 20A19 19 0 0 1 18.500 1" opacity=".6" />
              <path d="M5 20A15 15 0 0 1 18.500 6M9.500 20A10 10 0 0 1 18.500 11" />
              <circle cx="17" cy="18" r="1.500" fill="#fff" stroke="none" />
            </svg>
          </TrayButton>
          <TrayButton $w={32} aria-label="Volume">
            <svg width="23" height="20" viewBox="0 0 23 20" fill="none" stroke="#fff" strokeWidth="1.400">
              <path d="M1 6.500h3.500L9 2v16l-4.500-4.500H1z" />
              <path d="M12.500 7.500q2 2.500 0 5" />
              <path d="M15.500 5q4 5 0 10M18.500 2.500q6 7.500 0 15" opacity=".6" />
            </svg>
          </TrayButton>
          <TrayButton $w={50} aria-label="Touch keyboard">
            <svg width="33" height="19" viewBox="0 0 33 19" fill="none" stroke="#fff" strokeWidth="1.300">
              <path d="M.7.7h31.600v17.600H.7z" />
              <path d="M4 5h25M4 9.500h25" strokeDasharray="1.500 1.500" />
              <path d="M4 14h3M9 14h14M26 14h3" />
            </svg>
          </TrayButton>
          <TrayButton $w={56}>ENG</TrayButton>
          <Clock>
            <span>09:55</span>
            <span>20-02-2023</span>
          </Clock>
          <TrayButton $w={62} aria-label="Notifications">
            <svg width="24" height="24" viewBox="0 0 24 24" fill="none" stroke="#fff" strokeWidth="1.500">
              <path d="M.8.8h22.400v18H15L11 22.800 8 18.800H.8z" />
            </svg>
          </TrayButton>
          <ShowDesktop aria-label="Show desktop" />
        </Tray>
      </Taskbar>
    </Screen>
  );
}
